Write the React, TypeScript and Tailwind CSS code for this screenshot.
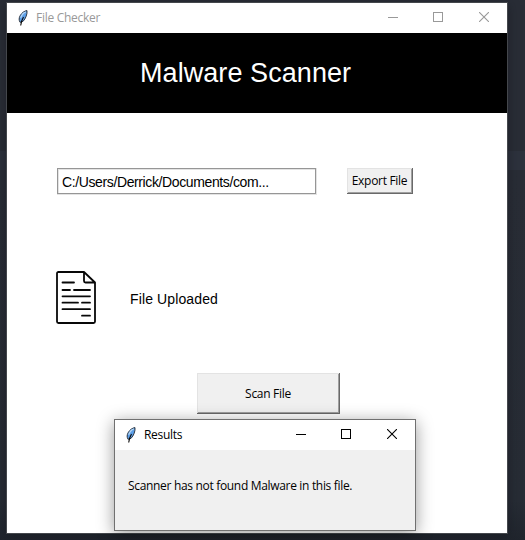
import React from "react";

function Feather() {
  return (
    <svg width="11" height="16" viewBox="0 0 11 16" className="block shrink-0">
      <path d="M9 .6C6.500.8 3.600 3 2.200 5.600C.8 8.200.8 10 2 12.300L5 11.400C7.800 8.500 9.400 4.200 9 .6Z" fill="#5c9fe8" stroke="#20262e" strokeWidth=".9" />
      <path d="M7.800 1.800C5.600 2.600 3.600 5 2.700 7.800" stroke="#b5d6f5" strokeWidth="1.300" fill="none" />
      <path d="M5.500 7C4.300 9 3.200 11.500 2.700 15.500" stroke="#080808" strokeWidth="1.100" fill="none" />
    </svg>
  );
}

function WindowControls({ color }: { color: string }) {
  return (
    <div className="flex items-center">
      <svg width="10" height="10" shapeRendering="crispEdges" className="block">
        <rect y="5" width="10" height="1" fill={color} />
      </svg>
      <svg width="10" height="10" className="ml-[35px] block">
        <rect x=".5" y=".5" width="9" height="9" fill="none" stroke={color} />
      </svg>
      <svg width="10" height="10" viewBox="0 0 10 10" className="ml-[36px] block">
        <path d="M0 0 10 10M10 0 0 10" stroke={color} strokeWidth="1.100" />
      </svg>
    </div>
  );
}

function DocumentIcon() {
  return (
    <svg width="40" height="53" viewBox="0 0 40 53" fill="none" stroke="#080808" strokeWidth="1.800" strokeLinecap="round" strokeLinejoin="round" className="block">
      <path d="M28 1H2.500Q1 1 1 2.500V50.500Q1 52 2.500 52H37.500Q39 52 39 50.500V11.500L28 1V10Q28 11.500 29.500 11.500H39" />
      <path d="M6.500 11.500H18M6.500 19H14M18 19H34M6.500 25.300H34M6.500 31.700H22M26 31.700H34M6.500 38.200H34M26 44.700H34" />
    </svg>
  );
}

const UI_FONT = "font-['Open_Sans',sans-serif]";

export default function App() {
  return (
    <div className="relative h-[540px] w-[525px] overflow-hidden bg-[linear-gradient(180deg,#292d36_0,#292d36_151px,#2d323d_151px,#2d323d_170px,#292d36_170px,#272c35_500px,#20252d_540px)] pl-[6px] pt-[2px]">
      <main className="h-[532px] w-[502px] border border-[#44474c] bg-white shadow-[0_3px_10px_#15191f99]">
        <header className="flex h-[30px] items-center bg-white pl-[11px] pr-[18px]">
          <Feather />
          <span className={`${UI_FONT} ml-[7px] whitespace-nowrap text-[12px] leading-[16px] tracking-[-0.28px] text-[#999]`}>File Checker</span>
          <div className="-mt-[2px] ml-auto"><WindowControls color="#999999" /></div>
        </header>
        <div className="h-[80px] bg-black pl-[133px] pt-[24px]">
          <h1 className="whitespace-nowrap font-['Liberation_Sans',sans-serif] text-[27px] leading-[32px] tracking-[0.07px] text-white">Malware Scanner</h1>
        </div>
        <div className="ml-[50px] mt-[55px] flex h-[27px] items-start">
          <div className="h-[27px] w-[260px] border-b border-r border-[#e3e3e3]">
            <div className="flex h-[26px] w-[259px] items-center border border-[#969696] pl-[4px] pt-[2px] shadow-[inset_1px_1px_0_#e3e3e3]">
              <span className="whitespace-nowrap font-['Liberation_Sans',sans-serif] text-[14px] leading-[18px] tracking-[-0.38px] text-black">C:/Users/Derrick/Documents/com...</span>
            </div>
          </div>
          <button className={`${UI_FONT} ml-[30px] flex h-[26px] w-[66px] items-center justify-center whitespace-nowrap border-b border-r border-[#696969] bg-[#f0f0f0] pt-px text-[12px] tracking-[-0.3px] text-black shadow-[inset_1px_1px_0_#e3e3e3,inset_-1px_-1px_0_#a0a0a0]`}>Export File</button>
        </div>
        <div className="ml-[49px] mt-[76px] flex h-[53px] items-center">
          <DocumentIcon />
          <span className="ml-[34px] mt-[3px] font-['Liberation_Sans',sans-serif] text-[14px] leading-[18px] tracking-[0.12px] text-black">File Uploaded</span>
        </div>
        <button className={`${UI_FONT} ml-[190px] mt-[49px] flex h-[41px] w-[143px] items-center justify-center border-b border-r border-[#696969] bg-[#f0f0f0] pt-[2px] text-[12px] tracking-[-0.3px] text-black shadow-[inset_1px_1px_0_#e3e3e3,inset_-1px_-1px_0_#a0a0a0]`}>Scan File</button>
      </main>
      <section className="absolute left-[114px] top-[419px] h-[112px] w-[302px] border border-[#707070] bg-[#f0f0f0] shadow-[0_3px_16px_#00000066]">
        <header className="flex h-[30px] items-center bg-white pl-[11px] pr-[18px]">
          <Feather />
          <span className={`${UI_FONT} ml-[7px] text-[12px] leading-[16px] tracking-[-0.3px] text-black`}>Results</span>
          <div className="-mt-[2px] ml-auto"><WindowControls color="#000000" /></div>
        </header>
        <p className={`${UI_FONT} ml-[13px] mt-[28px] whitespace-nowrap text-[12px] leading-[16px] tracking-[-0.32px] text-black`}>Scanner has not found Malware in this file.</p>
      </section>
    </div>
  );
}
